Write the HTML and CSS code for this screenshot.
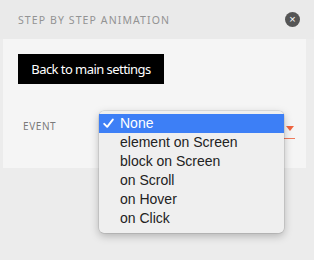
FILE: index.html
```html
<!DOCTYPE html>
<html>
<head>
<meta charset="utf-8">
<link rel="stylesheet" href="styles.css">
</head>
<body>
<div class="header">
  <span class="title">STEP BY STEP ANIMATION</span>
  <span class="close">×</span>
</div>
<div class="panel">
  <div class="back">Back to main settings</div>
  <div class="row">
    <span class="label">EVENT</span>
    <div class="field">
      <span class="arrow"></span>
      <div class="menu">
        <div class="item selected"><svg class="check" width="11" height="11" viewBox="0 0 11 11"><path d="M1.2 5.8 L4.2 8.8 L9.8 1.6" fill="none" stroke="#fff" stroke-width="1.9" stroke-linecap="round" stroke-linejoin="round"/></svg>None</div>
        <div class="item">element on Screen</div>
        <div class="item">block on Screen</div>
        <div class="item">on Scroll</div>
        <div class="item">on Hover</div>
        <div class="item">on Click</div>
      </div>
    </div>
  </div>
</div>
</body>
</html>
```
FILE: styles.css
```css
html, body { margin: 0; padding: 0; }
body {
  width: 314px;
  height: 260px;
  background: #ececec;
  font-family: "Liberation Sans", Arial, sans-serif;
  overflow: hidden;
}
.header {
  height: 39px;
  display: flex;
  align-items: center;
  justify-content: space-between;
  padding: 0 14px 0 18px;
  background: #eaeaea;
}
.title {
  font-family: "Noto Sans", sans-serif;
  font-size: 10.5px;
  letter-spacing: 1.1px;
  color: #939393;
  padding-top: 1px;
}
.close {
  width: 15px;
  height: 15px;
  border-radius: 50%;
  background: #555;
  color: #fff;
  font-size: 11px;
  line-height: 15px;
  text-align: center;
}
.panel {
  margin: 0 8px 0 3px;
  height: 129px;
  box-sizing: border-box;
  background: #f5f5f5;
  padding: 15px 0 0 15px;
}
.back {
  display: inline-block;
  background: #000;
  color: #fff;
  font-family: "Noto Sans", sans-serif;
  font-size: 13px;
  letter-spacing: -0.55px;
  height: 30px;
  line-height: 30px;
  width: 146px;
  box-sizing: border-box;
  text-align: center;
}
.row {
  display: flex;
  align-items: center;
  margin-top: 28px;
  padding-left: 5px;
}
.label {
  width: 76px;
  font-family: "Noto Sans", sans-serif;
  font-size: 10px;
  letter-spacing: 0.6px;
  color: #7a7a7a;
}
.field {
  position: relative;
  width: 196px;
  height: 26px;
  border-bottom: 1px solid #f07a5c;
}
.arrow {
  position: absolute;
  right: 1px;
  top: 14px;
  width: 0;
  height: 0;
  border-left: 4px solid transparent;
  border-right: 4px solid transparent;
  border-top: 5px solid #f0643f;
}
.menu {
  position: absolute;
  left: 0;
  top: -1px;
  width: 185px;
  box-sizing: border-box;
  padding: 3px 0 5px;
  background: #efefef;
  border-radius: 5px;
  box-shadow: 0 0 0 0.5px rgba(0,0,0,0.15), 0 3px 9px rgba(0,0,0,0.25);
}
.item {
  position: relative;
  height: 19px;
  line-height: 19px;
  padding-left: 21px;
  font-size: 14px;
  color: #222;
}
.item.selected {
  background: #3d7ff6;
  color: #fff;
}
.check {
  position: absolute;
  left: 4px;
  top: 4px;
}
```
